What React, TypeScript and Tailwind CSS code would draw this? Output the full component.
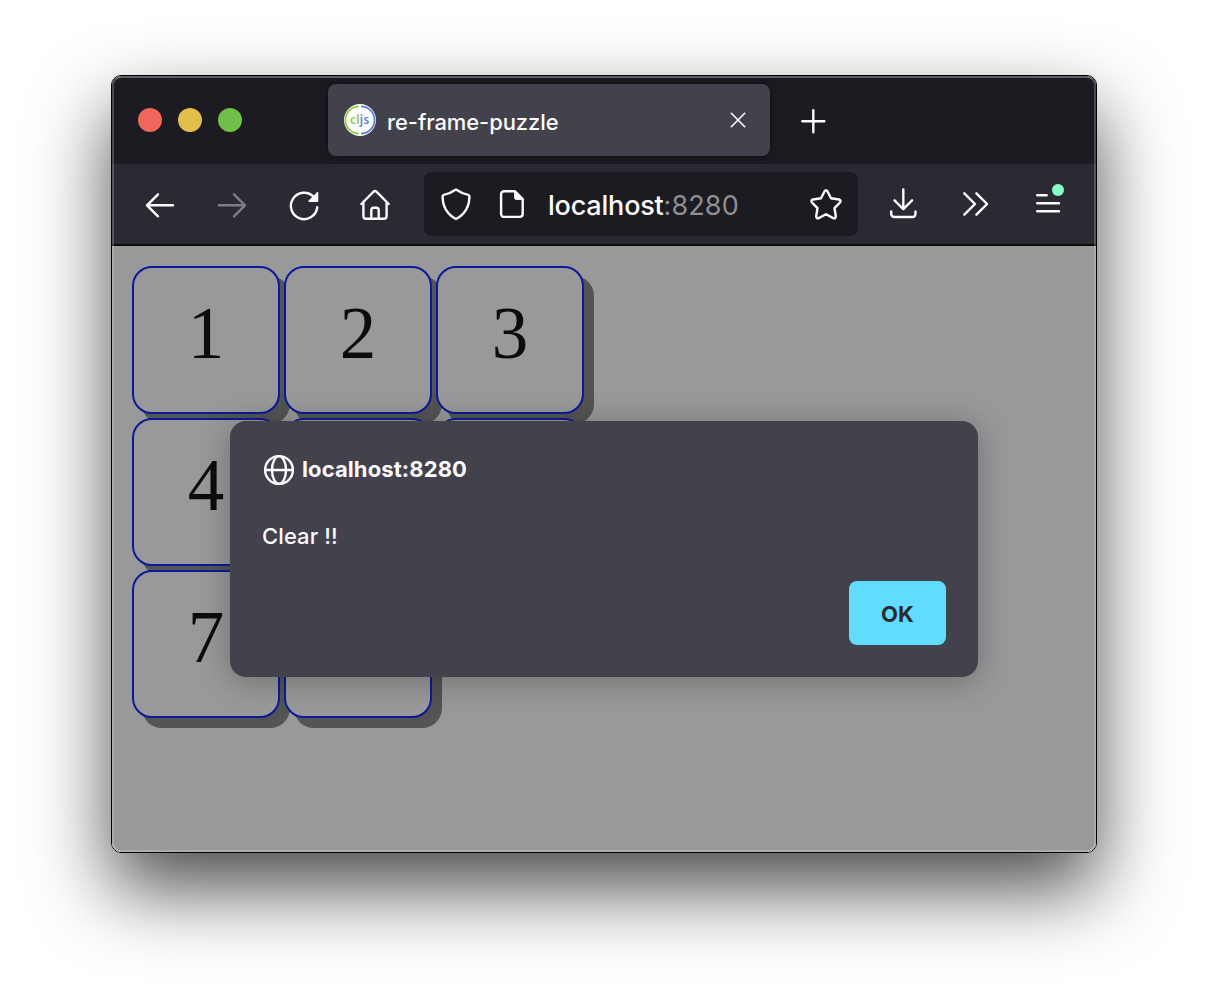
import type { ReactNode } from "react";

type IconProps = { box: string; size?: string; className?: string; children: ReactNode };

function Icon({ box, size = "size-8", className = "", children }: IconProps) {
  return (
    <svg
      viewBox={box}
      className={`${size} shrink-0 overflow-visible ${className}`}
      fill="none"
      stroke="currentColor"
      strokeWidth={2.4}
      strokeLinecap="round"
      strokeLinejoin="round"
    >
      {children}
    </svg>
  );
}

function Favicon() {
  return (
    <svg viewBox="0 0 32 32" className="size-8 shrink-0" fill="none">
      <circle cx="16" cy="16" r="16" fill="#fff" />
      <path d="M15 2.400a13.600 13.600 0 0 0 0 27.200" stroke="#96ca4b" strokeWidth="1.800" />
      <path d="M17 2.400a13.600 13.600 0 0 1 0 27.200" stroke="#5881d8" strokeWidth="1.800" />
      <text x="6" y="19.800" fontFamily="Noto Sans" fontSize="11.700" fontWeight="600" letterSpacing="0.300">
        <tspan fill="#96ca4b">cl</tspan>
        <tspan fill="#5881d8">js</tspan>
      </text>
    </svg>
  );
}

function TabBar() {
  return (
    <div className="flex h-22 items-start bg-[#1c1b21] pl-[26px] pt-2">
      <div className="flex h-18 items-center gap-4">
        <span className="size-6 rounded-full bg-[#ee665c]" />
        <span className="size-6 rounded-full bg-[#e0c04d]" />
        <span className="size-6 rounded-full bg-[#70bf48]" />
      </div>
      <div className="ml-[86px] flex h-18 w-[442px] items-center rounded-lg bg-[#43414b] pl-4 pr-4 shadow-[0_0_6px_rgba(0,0,0,0.6)]">
        <Favicon />
        <span className="ml-[11px] mt-1 text-[22px] font-medium leading-7 tracking-[-0.1px] text-[#fbfbfe]">
          re-frame-puzzle
        </span>
        <Icon box="722 104 32 32" className="ml-auto text-[#fbfbfe]">
          <path strokeWidth="1.600" d="M731.300 113.300l13.400 13.400M744.700 113.300l-13.400 13.400" />
        </Icon>
      </div>
      <div className="ml-[27px] flex h-18 items-center">
        <Icon box="797 104 32 32" className="text-[#fbfbfe]">
          <path d="M813.300 110.300v22M802.300 121.300h22" />
        </Icon>
      </div>
    </div>
  );
}

function UrlBar() {
  return (
    <div className="ml-8 flex h-16 w-[434px] items-center rounded-lg bg-[#1c1b21] px-4">
      <Icon box="440 188 32 32">
        <path d="M456 189.600c-4 2.800-8.600 4.600-12.200 5.300q-1.200.3-1.200 1.500c0 9 3.200 17 13.400 22.600 10.200-5.600 13.400-13.600 13.400-22.600q0-1.200-1.200-1.500c-3.600-.7-8.200-2.500-12.200-5.300z" />
      </Icon>
      <Icon box="496 188 32 32" className="ml-6">
        <path d="M515 191.300h-11a2.900 2.900 0 0 0-2.900 2.900v19.800a2.900 2.900 0 0 0 2.900 2.900h15.800a2.900 2.900 0 0 0 2.900-2.900v-15z" />
        <path strokeWidth="1" fill="currentColor" d="M514.600 190.800v7a1.600 1.600 0 0 0 1.600 1.600h7z" />
      </Icon>
      <span className="ml-5 mt-[3px] text-[27px] font-medium leading-8 tracking-[-0.2px] text-[#fbfbfe]">
        localhost<span className="font-normal tracking-[0.1px] text-[#8f8f94]">:8280</span>
      </span>
      <Icon box="810 188 32 32" className="ml-auto">
        <path d="M824.600 191.300q1.400-2 2.800 0l3.600 7 8 1.200q2.500.7 1.100 2.900l-5.600 5.800 1.300 7.900q0 2.700-2.500 2l-7.300-3.800-7.300 3.800q-2.500.7-2.500-2l1.300-7.900-5.600-5.800q-1.400-2.200 1.100-2.900l8-1.200z" />
      </Icon>
    </div>
  );
}

function Toolbar() {
  return (
    <div className="flex h-[82px] items-center border-b-2 border-[#0c0c0d] bg-[#2b2a33] pl-8 text-[#fbfbfe]">
      <div className="flex gap-10">
        <Icon box="144 188 32 32">
          <path d="M173 205.300h-26M158 194.300l-11 11 11 11" />
        </Icon>
        <Icon box="216 188 32 32" className="text-[#7e7d83]">
          <path d="M219 205.300h26M234 194.300l11 11-11 11" />
        </Icon>
        <Icon box="288 188 32 32">
          <path d="M317.200 207.300a13.200 13.200 0 1 1-3.600-10.500" />
          <path stroke="none" fill="currentColor" d="M318.300 193.300v7.500a1.300 1.300 0 0 1-1.300 1.300h-7.500c-1.200 0-1.500-1-.8-1.700l8-8c.7-.7 1.600-.3 1.600.900z" />
        </Icon>
        <Icon box="360 188 32 32">
          <path d="M361.300 204l12.300-12.300q1.400-1.300 2.800 0l12.300 12.300M363.400 202.300v13.800a2.700 2.700 0 0 0 2.700 2.700h17.800a2.700 2.700 0 0 0 2.700-2.700v-13.800" />
          <path d="M371.300 218.300v-8a2.500 2.500 0 0 1 2.500-2.500h2.400a2.500 2.500 0 0 1 2.500 2.500v8" />
        </Icon>
      </div>
      <UrlBar />
      <div className="ml-[30px] flex gap-10">
        <Icon box="888 188 32 32">
          <path d="M903.300 189.500v19M894.500 200.300l8.800 8.800 8.800-8.800M891.200 211.500v2.500a3 3 0 0 0 3 3h18.300a3 3 0 0 0 3-3v-2.500" />
        </Icon>
        <Icon box="960 188 32 32">
          <path d="M964.300 193.300l10.700 10.700-10.700 10.700M976.400 193.300l10.700 10.700-10.700 10.700" />
        </Icon>
        <Icon box="1032 188 32 32">
          <path d="M1037.200 195.200h9.500M1037.200 203.300h21.800M1037.200 211.300h21.800" />
          <circle cx="1058" cy="190" r="6" fill="#88ffc6" stroke="none" />
        </Icon>
      </div>
    </div>
  );
}

const tiles = ["1", "2", "3", "4", "", "", "7", ""];

function Board() {
  return (
    <div className="grid w-fit grid-cols-3 gap-1 pl-5 pt-5">
      {tiles.map((n, i) => (
        <div
          key={i}
          className="relative size-[148px] rounded-[20px] border-2 border-[#0c1a99] bg-[#99999b] text-center font-['Liberation_Serif',serif] text-[73px] leading-[131px] text-[#0c0c0d] shadow-[10px_10px_0_#545455]"
        >
          {n}
        </div>
      ))}
    </div>
  );
}

function AlertDialog() {
  return (
    <div
      role="alertdialog"
      className="absolute left-[118px] top-[175px] flex h-64 w-[748px] flex-col rounded-2xl bg-[#43414b] p-8 text-[22px] text-[#fbfbfe] shadow-[0_4px_32px_rgba(12,12,13,0.3)]"
    >
      <div className="flex h-8 items-center">
        <Icon box="262 453 32 32">
          <circle cx="279" cy="470" r="13.900" />
          <ellipse cx="279" cy="470" rx="7" ry="13.900" />
          <path d="M265.500 470h27" />
        </Icon>
        <span className="ml-2 font-bold leading-8 tracking-[0.1px]">localhost:8280</span>
      </div>
      <p className="mt-[35px] font-[450] leading-8 tracking-[0.1px]">Clear !!</p>
      <button className="ml-auto mt-auto h-16 w-[97px] rounded-lg bg-[#61dbff] pt-0.5 font-bold text-[#2b2a33]">
        OK
      </button>
    </div>
  );
}

export default function App() {
  return (
    <div className="flex h-[1000px] w-[1208px] items-start justify-center overflow-hidden bg-white pt-[75px] font-['Inter',sans-serif]">
      <div className="relative h-[778px] w-[986px] overflow-visible rounded-[10px] border border-black shadow-[0_36px_78px_rgba(0,0,0,0.7)]">
        <div className="flex h-full flex-col overflow-hidden rounded-[9px]">
          <TabBar />
          <Toolbar />
          <main className="relative flex-1 bg-[#99999b]">
            <Board />
            <AlertDialog />
          </main>
        </div>
        <div className="pointer-events-none absolute inset-0 rounded-[9px] border-2 border-white/20 border-t-white/30" />
      </div>
    </div>
  );
}
